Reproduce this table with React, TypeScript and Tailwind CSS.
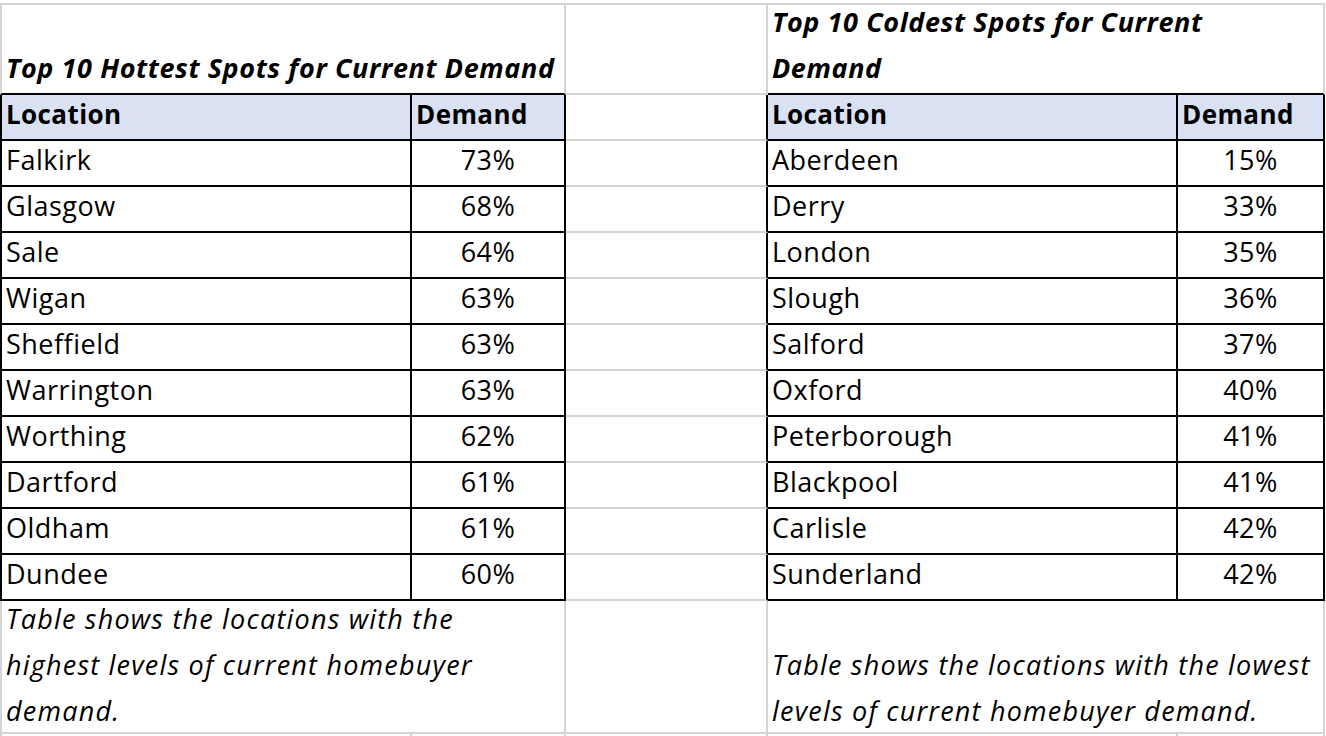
import React from 'react';

type Row = { place: string; demand: string };

const hottest: Row[] = [
  { place: 'Falkirk', demand: '73%' },
  { place: 'Glasgow', demand: '68%' },
  { place: 'Sale', demand: '64%' },
  { place: 'Wigan', demand: '63%' },
  { place: 'Sheffield', demand: '63%' },
  { place: 'Warrington', demand: '63%' },
  { place: 'Worthing', demand: '62%' },
  { place: 'Dartford', demand: '61%' },
  { place: 'Oldham', demand: '61%' },
  { place: 'Dundee', demand: '60%' },
];

const coldest: Row[] = [
  { place: 'Aberdeen', demand: '15%' },
  { place: 'Derry', demand: '33%' },
  { place: 'London', demand: '35%' },
  { place: 'Slough', demand: '36%' },
  { place: 'Salford', demand: '37%' },
  { place: 'Oxford', demand: '40%' },
  { place: 'Peterborough', demand: '41%' },
  { place: 'Blackpool', demand: '41%' },
  { place: 'Carlisle', demand: '42%' },
  { place: 'Sunderland', demand: '42%' },
];

// one spreadsheet cell: bottom-aligned text, owns its right and bottom lines
const Cell: React.FC<{ className?: string; children?: React.ReactNode }> = ({ className = '', children }) => (
  <div className={`flex items-end overflow-visible border-r-2 border-b-2 px-[4px] leading-[46px] whitespace-nowrap ${className}`}>
    {children}
  </div>
);

const title = 'pb-[2px] font-bold italic text-[27px] tracking-[0.6px]';
const head = 'pb-[2px] font-bold text-[26px] tracking-[0.4px]';
const body = 'pb-[2px] text-[27px] tracking-[0.5px]';
const note = 'pb-0 italic text-[27px] tracking-[1.2px]';

export default function App() {
  return (
    <div
      className="min-h-screen bg-white text-black"
      style={{ fontFamily: '"Open Sans", "Noto Sans", sans-serif' }}
    >
      <div className="pt-[3px] overflow-hidden h-[736px]">
        <div className="grid w-[1325px] grid-cols-[412px_154px_202px_410px_147px] grid-rows-[90px_repeat(11,46px)_133px_46px] border-t-2 border-[#d4d4d4]">
          {/* titles */}
          <Cell className={`col-span-2 border-l-2 border-l-[#d4d4d4] border-r-[#d4d4d4] border-b-black ${title}`}>
            Top 10 Hottest Spots for Current Demand
          </Cell>
          <Cell className="border-r-[#d4d4d4] border-b-[#d4d4d4]" />
          <Cell className={`col-span-2 border-r-[#d4d4d4] border-b-black ${title}`}>
            <span>
              Top 10 Coldest Spots for Current
              <br />
              Demand
            </span>
          </Cell>

          {/* header row */}
          <Cell className={`border-l-2 border-black bg-[#d9e1f2] ${head}`}>Location</Cell>
          <Cell className={`border-black bg-[#d9e1f2] ${head}`}>Demand</Cell>
          <Cell className="border-r-black border-b-[#d4d4d4]" />
          <Cell className={`border-black bg-[#d9e1f2] ${head}`}>Location</Cell>
          <Cell className={`border-black bg-[#d9e1f2] ${head}`}>Demand</Cell>

          {hottest.map((h, i) => (
            <React.Fragment key={h.place}>
              <Cell className={`border-l-2 border-black ${body}`}>{h.place}</Cell>
              <Cell className={`border-black justify-center ${body}`}>{h.demand}</Cell>
              <Cell className="border-r-black border-b-[#d4d4d4]" />
              <Cell className={`border-black ${body}`}>{coldest[i].place}</Cell>
              <Cell className={`border-black justify-center ${body}`}>{coldest[i].demand}</Cell>
            </React.Fragment>
          ))}

          {/* notes */}
          <Cell className={`col-span-2 border-l-2 border-[#d4d4d4] ${note}`}>
            <span className="block mb-[-2px]">
              Table shows the locations with the
              <br />
              highest levels of current homebuyer
              <br />
              demand.
            </span>
          </Cell>
          <Cell className="border-[#d4d4d4]" />
          <Cell className={`col-span-2 border-[#d4d4d4] ${note}`}>
            <span className="block mb-[-2px]">
              Table shows the locations with the lowest
              <br />
              levels of current homebuyer demand.
            </span>
          </Cell>

          {/* next empty row */}
          <Cell className="border-l-2 border-[#d4d4d4]" />
          <Cell className="border-[#d4d4d4]" />
          <Cell className="border-[#d4d4d4]" />
          <Cell className="border-[#d4d4d4]" />
          <Cell className="border-[#d4d4d4]" />
        </div>
      </div>
    </div>
  );
}
